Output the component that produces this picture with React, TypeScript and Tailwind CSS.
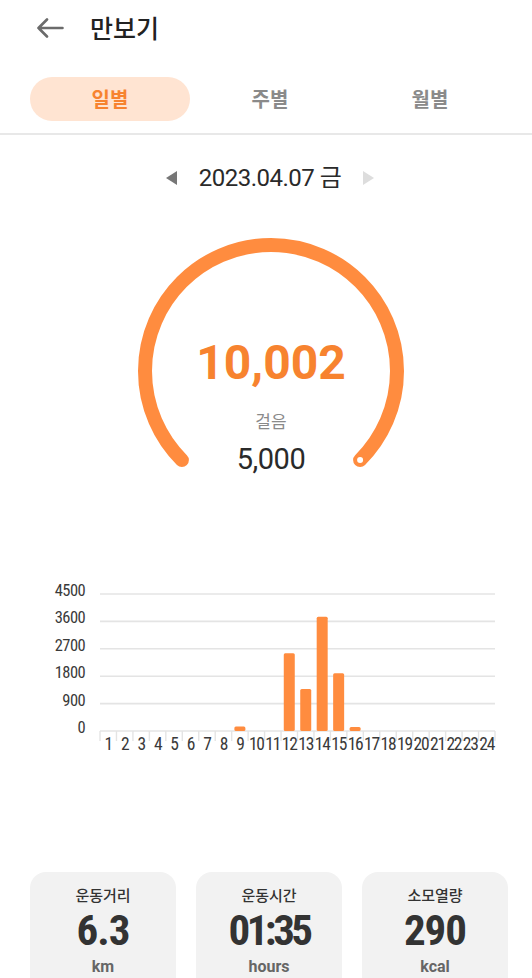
import React from "react";

const ORANGE = "#FF8C3F";
const COND = "font-['Roboto_Condensed','Liberation_Sans_Narrow','DejaVu_Sans_Condensed',Roboto,sans-serif]";
const CONDF = "'Roboto Condensed','Liberation Sans Narrow',Roboto,sans-serif";

function BackArrow() {
  return (
    <svg width="28" height="20" viewBox="0 0 28 20" fill="none">
      <path d="M26.5 10H2.5M11 1.5L2.5 10L11 18.5" stroke="#6b6b6b" strokeWidth="2.6" strokeLinecap="round" strokeLinejoin="round" />
    </svg>
  );
}

function Gauge() {
  const cx = 140, cy = 133, r = 126;
  const a = Math.SQRT1_2 * r;
  const sx = cx - a, sy = cy + a, ex = cx + a, ey = cy + a;
  return (
    <div className="grid ml-[131px] w-[280px] h-[240px]">
      <svg className="[grid-area:1/1]" width="280" height="240" viewBox="0 0 280 240">
        <path d={`M${sx} ${sy} A${r} ${r} 0 1 1 ${ex} ${ey}`} stroke={ORANGE} strokeWidth="14" strokeLinecap="round" fill="none" />
        <circle cx={ex} cy={ey} r="3" fill="#fff" />
      </svg>
      <div className="[grid-area:1/1] flex flex-col items-center pt-[101px]">
        <div className="text-[48px] leading-[48px] font-bold text-[#F7832F] font-['Roboto',sans-serif]">10,002</div>
        <div className="mt-[22px] text-[17px] leading-[24px] text-[#8a8a8a] font-['Noto_Sans_CJK_KR',sans-serif]">걸음</div>
        <div className="mt-[11px] text-[29px] leading-[30px] text-[#2a2a2a] font-['Roboto',sans-serif] tracking-[-0.5px]">5,000</div>
      </div>
    </div>
  );
}

const values: Record<number, number> = { 9: 150, 12: 2550, 13: 1380, 14: 3750, 15: 1900, 16: 130 };

function Chart() {
  const left = 100, right = 495;
  const cw = (right - left) / 24;
  const base = 151;
  const step = 27.4;
  const grid = [0, 900, 1800, 2700, 3600, 4500];
  return (
    <svg width="532" height="180" viewBox="0 0 532 180" className="block">
      {grid.map((g, i) => {
        const y = base - i * step;
        return (
          <g key={g}>
            <line x1={left} x2={right} y1={y} y2={y} stroke="#e4e4e4" strokeWidth="1.6" />
            <text x={85} y={y + 2} textAnchor="end" fontSize="16.5" fill="#3a3a3a" letterSpacing="-0.6" fontFamily={CONDF}>{g}</text>
          </g>
        );
      })}
      {Array.from({ length: 25 }, (_, i) => (
        <line key={i} x1={left + i * cw} x2={left + i * cw} y1={base} y2={base + 10} stroke="#e4e4e4" strokeWidth="1.4" />
      ))}
      {Array.from({ length: 24 }, (_, i) => (
        <text key={i} x={left + (i + 0.5) * cw} y={170} textAnchor="middle" fontSize="17.5" fill="#3a3a3a" letterSpacing="-1.2" fontFamily={CONDF}>{i + 1}</text>
      ))}
      {Object.entries(values).map(([k, v]) => {
        const i = Number(k);
        const h = (v / 4500) * (5 * step);
        const x = left + (i - 0.5) * cw - 5.5;
        return <rect key={k} x={x} y={base - h} width="11" height={h} rx="1.5" fill={ORANGE} />;
      })}
    </svg>
  );
}

function Card({ label, value, unit, tight }: { label: string; value: string; unit: string; tight?: boolean }) {
  return (
    <div className="h-[130px] rounded-[16px] bg-[#f2f2f2] flex flex-col items-center pt-[12px]">
      <div className="text-[15px] leading-[22px] font-medium text-[#333] font-['Noto_Sans_CJK_KR',sans-serif]">{label}</div>
      <div className={`mt-[3px] text-[43px] leading-[43px] font-bold text-[#333] ${tight ? "tracking-[-3.5px]" : "tracking-[-1px]"} ${COND}`}>{value}</div>
      <div className="mt-[4px] text-[16px] leading-[22px] font-bold text-[#666] font-['Roboto',sans-serif]">{unit}</div>
    </div>
  );
}

export default function App() {
  return (
    <div className="w-[532px] h-[978px] overflow-hidden bg-white font-['Noto_Sans_CJK_KR',sans-serif]">
      <div className="h-[55px] flex items-center pl-[36px] gap-[26px]">
        <BackArrow />
        <div className="text-[25px] font-medium text-[#222] leading-none">만보기</div>
      </div>
      <div className="mt-[22px] ml-[30px] w-[480px] grid grid-cols-3 h-[44px]">
        <div className="rounded-full bg-[#FFE4D2] flex items-center justify-center text-[20px] font-bold text-[#F7832F]">일별</div>
        <div className="flex items-center justify-center text-[20px] font-bold text-[#8a8a8a]">주별</div>
        <div className="flex items-center justify-center text-[20px] font-bold text-[#8a8a8a]">월별</div>
      </div>
      <div className="mt-[12px] h-[2px] bg-[#e8e8e8]" />
      <div className="mt-[28px] h-[30px] flex items-center justify-center gap-[22px] pl-[8px]">
        <svg width="11" height="14" viewBox="0 0 11 14"><path d="M11 0V14L0 7Z" fill="#777" /></svg>
        <div className="text-[24px] leading-[30px] text-[#2a2a2a] tracking-[-0.5px] font-['Roboto','Noto_Sans_CJK_KR',sans-serif]">2023.04.07 금</div>
        <svg width="11" height="14" viewBox="0 0 11 14"><path d="M0 0V14L11 7Z" fill="#ddd" /></svg>
      </div>
      <div className="mt-[45px]">
        <Gauge />
      </div>
      <div className="mt-[102px]">
        <Chart />
      </div>
      <div className="mt-[112px] pl-[30px] pr-[24px] grid grid-cols-3 gap-[20px]">
        <Card label="운동거리" value="6.3" unit="km" />
        <Card label="운동시간" value="01:35" unit="hours" tight />
        <Card label="소모열량" value="290" unit="kcal" />
      </div>
    </div>
  );
}
